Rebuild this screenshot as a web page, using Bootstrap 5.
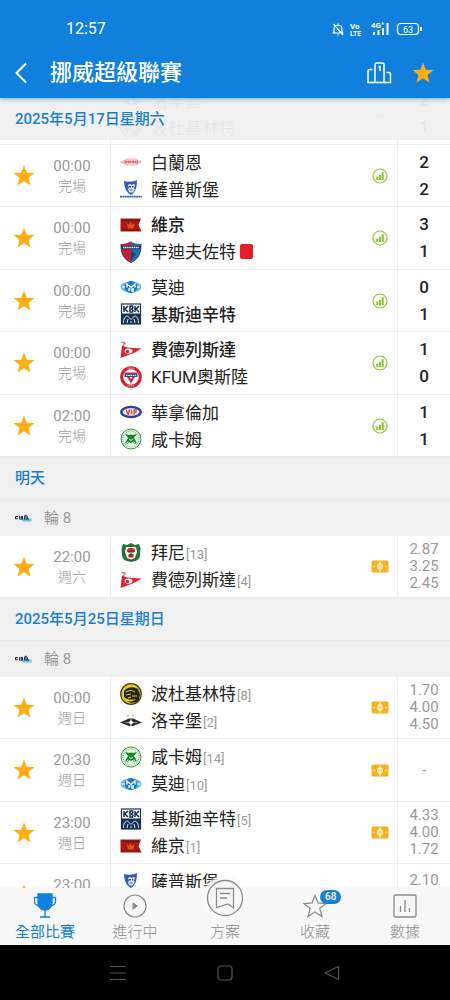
<!DOCTYPE html>
<html lang="zh-Hant">
<head>
<meta charset="utf-8">
<meta name="viewport" content="width=device-width, initial-scale=1">
<title>挪威超級聯賽</title>
<link href="https://cdn.jsdelivr.net/npm/bootstrap@5.3.0/dist/css/bootstrap.min.css" rel="stylesheet">
<style>
:root{--brand:#1080dc;--muted:#999;--line:#ececec;--band:#f0f0f0}
body{font-family:Roboto,"Noto Sans CJK TC",sans-serif;font-size:15px;color:#222;background:#fff}
.screen{height:100vh}
.top-bar{background:var(--brand);box-shadow:0 1px 5px rgba(16,128,220,.6);z-index:5}
.status{height:48px;padding:10px 28px 0 66px;font-size:16px}
.toolbar{height:50px;padding:0 16px 0 14px}
.toolbar h1{font-size:22px;font-weight:500;margin-left:22px}
.icon-btn{background:none;border:0;padding:0;display:flex;color:inherit}
svg{display:block;flex:none}
.scroll-area{min-height:0}
.date-head{height:42px;padding:0 15px;background:var(--band);color:#1b7fcf;font-size:15px;font-weight:500}
.date-head.pinned{top:0;z-index:2;height:42px;background:rgba(240,240,240,.96)}
.round-head{height:37px;padding:0 15px;gap:12px;background:var(--band);border-top:1px solid #eaeaea;color:var(--muted)}
.under-head{margin-top:-15px}
.match{display:grid;grid-template-columns:48px 62px minmax(0,1fr) 35px 53px;height:62px;border-bottom:1px solid var(--line)}
.match:nth-child(even){height:63px}
.when{padding-right:14px;line-height:20px;color:var(--muted)}
.when span:last-child{font-size:14px;font-weight:300}
.teams{border-left:1px solid var(--line);padding-left:9px}
.team{height:27px;gap:9px;font-size:17px;line-height:25px;white-space:nowrap}
.team span{padding-top:2px}
.team .won{font-weight:500}
.team small{font-size:13px;color:var(--muted);margin-left:1px}
.red-card{width:13px;height:15px;border-radius:2px;background:#e11e2b;margin-left:-5px}
.result{border-left:1px solid var(--line)}
.score{font-size:17px;font-weight:500;line-height:27px}
.odds{line-height:17px;color:var(--muted)}
.tabs{height:57px;background:#f7f7f7;box-shadow:0 0 3px rgba(0,0,0,.08);z-index:5}
.tabs a{color:#8b8b8b;font-size:15px;line-height:20px;font-weight:300;padding-top:4px;gap:3px;text-decoration:none}
.tabs a.active{color:var(--brand);font-weight:400}
.tab-icon{height:27px}
.plan-icon{width:38px;height:38px;margin-top:-13px;background:#f7f7f7;border-radius:50%;box-shadow:0 0 3px 3px #fafafa}
.fav-count{top:-2px;left:17px;font-size:10px;line-height:14px;font-weight:500;padding:0 5px;border-radius:7px;background:#1b7fcf;color:#fff}
.system-bar{height:55px;background:#000;color:#555;padding:0 64px}
</style>
</head>
<body>
<svg width="0" height="0" class="position-absolute" aria-hidden="true">
<symbol id="star" viewBox="0 0 22 22"><path fill="#fdae17" d="M11 .5l2.800 7.200 7.700.400-6 4.800 2 7.500-6.500-4.200-6.500 4.200 2-7.500-6-4.800 7.700-.400z"/></symbol>
<symbol id="stats" viewBox="0 0 16 16"><circle cx="8" cy="8" r="7" fill="#fbfff5" stroke="#8fc83e" stroke-width="1.200"/><path fill="#86c52c" d="M4.300 8.500h2v3.500h-2zM7 7h2v5H7zM9.700 4.200h2V12h-2z"/></symbol>
<symbol id="cash" viewBox="0 0 18 13"><rect x=".5" y=".5" width="17" height="12" rx="1.500" fill="#f6b024"/><g stroke="#fff3cf" stroke-width="1.300" fill="none"><ellipse cx="9" cy="6.500" rx="2.200" ry="2.600"/><path d="M9 1.500v10M2.500 6.500h1.300M14.200 6.500h1.300"/></g></symbol>
<symbol id="brann" viewBox="0 0 22 22"><path d="M1 11l6-3h8l6 3-6 3H7z" fill="#fff1f0" stroke="#ee8b86" stroke-width=".7"/><path d="M0 11h22" stroke="#f3b2ae" stroke-width=".7"/><path d="M5 10h2v2H5zM8.500 10h2v2h-2zM12 10h2v2h-2zM15.500 10h2v2h-2z" fill="none" stroke="#e0403c" stroke-width=".8"/></symbol>
<symbol id="sarps" viewBox="0 0 22 22"><path d="M4 3c4 1 9 1 13-1 0 6-1 12-6 15-4-2-7-7-7-14z" fill="#3b5bbb"/><path d="M8 7l2-1 2 1 2-1 1 1-1 3 .5 2-2 2.500h-3L8 12l1-2.500z" fill="#e3eafc"/><path d="M9 8h2v1.500H9zM12 8h1.500v1.500H12zM9.500 11.500h3v1h-3z" fill="#2a489f"/><path d="M0 18.700h22" stroke="#4361b5" stroke-width="1.800" stroke-dasharray="2 .3"/></symbol>
<symbol id="sarps-small" viewBox="0 0 22 22"><path d="M4 3c4 1 9 1 13-1 0 6-1 12-6 15-4-2-7-7-7-14z" fill="#3b5bbb"/><path d="M8 7l2-1 2 1 2-1 1 1-1 3 .5 2-2 2.500h-3L8 12l1-2.500z" fill="#e3eafc"/><path d="M9 8h2v1.500H9zM12 8h1.500v1.500H12zM9.500 11.500h3v1h-3z" fill="#2a489f"/></symbol>
<symbol id="viking" viewBox="0 0 22 22"><path d="M.5 4.500h20.500L18.500 11l3 6.500H.5z" fill="#a51b19"/><path d="M2 6.200h17" stroke="#6e1010" stroke-width="1.500" stroke-dasharray="2 .6"/><path d="M7 9l2 2.200L10.500 8l1.500 3 2.500-2-1 5.500H8z" fill="#e0551f"/><path d="M1 16h17" stroke="#7c1211"/></symbol>
<symbol id="sandefjord" viewBox="0 0 22 22"><path d="M11 .5c3 2 6.500 2.500 10 2.500.5 8-2 15-10 18.500C3 18 .5 11 1 3c3.500 0 7-.5 10-2.500z" fill="#246fa9"/><path d="M11 .5v21C3 18 .5 11 1 3c3.500 0 7-.5 10-2.500z" fill="#c81f35"/><path d="M1.500 6.500h19" stroke="#2a345a" stroke-width="3.500"/><path d="M3 6.500h16" stroke="#e6eef5" stroke-width="1.400" stroke-dasharray="1.300 .5"/><path d="M11 9l5 4-5 7z" fill="#174a7c"/><path d="M1 3c.0 8 1.500 15 10 18.500C19.500 18 21 11 21 3" fill="none" stroke="#34446f"/></symbol>
<symbol id="molde" viewBox="0 0 22 22"><ellipse cx="11" cy="11" rx="10.500" ry="5.500" fill="#65b8e7"/><ellipse cx="11" cy="11" rx="6.500" ry="6" fill="#187dc1"/><path d="M2 11h3M17 11h3" stroke="#dff3ff" stroke-width="1.500"/><path d="M7 11.500V8l4 3.500L15 8v3.500M9 15v-2h1.500M14 13h-2v2h2" fill="none" stroke="#fff" stroke-width="1.300"/></symbol>
<symbol id="kbk" viewBox="0 0 22 22"><rect x="1.500" y="1" width="19" height="20" fill="#fff" stroke="#193454" stroke-width="1.200"/><path d="M4 3v6M8 3L5 6l3 3M10 3v6h2.500L13 7.500 11.500 6 13 4.500 12.500 3zM15 3v6M19 3l-3 3 3 3" fill="none" stroke="#152f4e" stroke-width="1.500"/><path d="M2 10.500h18V21H2z" fill="#173150"/><path d="M3.500 20c0-4 1.500-7 4-7l3.500 3.500 3.500-3.500c2.500 0 4 3 4 7M7 20l1-4M11 20v-2M15 20l-1-4" fill="none" stroke="#dfe8f1"/></symbol>
<symbol id="fredrikstad" viewBox="0 0 22 22"><path d="M2 6.500l5 2L21.500 9.500 14 14 .5 19z" fill="#d92331"/><path d="M1 3l5 2M4.500 3l-1 4" stroke="#e36a6e" stroke-width="1.200"/><ellipse cx="8.500" cy="12" rx="4" ry="2.600" fill="#fff"/><circle cx="7.500" cy="12.500" r="1.700" fill="#d92331"/></symbol>
<symbol id="kfum" viewBox="0 0 22 22"><circle cx="11" cy="11" r="9.300" fill="#fff" stroke="#d02136" stroke-width="3"/><path d="M7.500 2.200h7M7.500 19.800h7" stroke="#fff" stroke-width=".8" stroke-dasharray="1 .7"/><path d="M4.500 6.500h13L11 17.500z" fill="#d02136"/><path d="M8.500 9h5L11 13.500z" fill="#fff"/><path d="M4.500 7.500h13v3.500h-13z" fill="#34498d"/><path d="M6 9.300h10" stroke="#fff" stroke-width="1.200" stroke-dasharray="1.500 .8"/></symbol>
<symbol id="vif" viewBox="0 0 22 22"><ellipse cx="11" cy="11" rx="9.700" ry="5" fill="#fff" stroke="#27419c" stroke-width="2.400"/><path d="M6 8.500l2 5 1.500-5M11.500 8.500v5M14 14V9h2v2.500h-2" fill="none" stroke="#e14b48" stroke-width="1.500"/></symbol>
<symbol id="hamkam" viewBox="0 0 22 22"><circle cx="11" cy="11" r="10" fill="#f3fff2" stroke="#329d3a"/><circle cx="11" cy="11" r="8" fill="none" stroke="#74bd74" stroke-width="1.500" stroke-dasharray="1 1"/><path d="M5 6l5 1 1-1 1 1 5-1-3 4 3 5-3 1-1-2-2 1-2-1-1 2-3-1 3-5z" fill="#18872b"/><path d="M9 11l2 1.500 2-1.500M7 15.500l1-2M15 15.500l-1-2" fill="none" stroke="#dbf6db"/></symbol>
<symbol id="bryne" viewBox="0 0 22 22"><path d="M3 2l4 1 4-2 4 2 4-1 1.500 4L20 14c-1 4-4 5-9 6-5-1-8-2-9-6L1.500 6z" fill="#2a6f3a"/><path d="M6 5h10l1 5-2 6-4 1.500L7 16l-2-6z" fill="#fff3ef"/><path d="M7 8c1-3 7-3 8 0v2H7zM8.500 12h5v3.500h-5z" fill="#b63435"/><path d="M8 10h6M11 11v4" stroke="#2f2a26"/></symbol>
<symbol id="bodo" viewBox="0 0 22 22"><circle cx="11" cy="11" r="10.300" fill="#e2ce1e" stroke="#403b12" stroke-width="1.200"/><path d="M4 8c3-4 9-5 14-2l2 5-1 6c-3 3-8 4-12 1 4 1 7 0 9-2-4 1-9 1-12-2z" fill="#252416"/><path d="M6 9c3-2 6-2 9 0M6 12l5-1M12 13h5M8 15l3-1" fill="none" stroke="#dfcc22" stroke-width="1.200"/></symbol>
<symbol id="rosenborg" viewBox="0 0 22 22"><path d="M0 12.500l9-4h4l9 4-9 3.500H9z" fill="#2c2c2c"/><path d="M5 12.500h12" stroke="#aaa" stroke-width=".8"/><path d="M11 9v7M9 12.500l2-2 2 2-2 2z" stroke="#fff" fill="#fff" stroke-width=".7"/><path d="M7 5.500h2M12 5.500h2" stroke="#eebd90" stroke-width="1.800"/></symbol>
<symbol id="league" viewBox="0 0 17 10"><path d="M6 5.500h10.500v3H8z" fill="#57c8e8"/><path d="M0 3h3v1.200H1v1h2v1H0zM4 3h4v3.500H4zM9 3l2-1.500L12.500 3 14 6.500H9z" fill="#24384f"/><path d="M5.500 3v3M11 3v3" stroke="#dbe8ef" stroke-width=".7"/></symbol>
</svg>

<div class="screen d-flex flex-column overflow-hidden">
<header class="top-bar position-relative text-white flex-shrink-0">
  <div class="status d-flex align-items-center justify-content-between">
    <span>12:57</span>
    <svg width="92" height="18" viewBox="0 0 92 18" fill="none" stroke="#fff" font-family="Roboto" role="img" aria-label="63%">
      <path d="M4 13V9c0-5 8-5 8 0v4M2.500 13h11M8 14.500v1M8 3.500V5M3.500 4l9.500 11" stroke-width="1.200"/>
      <g fill="#fff" stroke="none" font-weight="700"><text x="20" y="8.500" font-size="8">Vo</text><text x="20" y="15.500" font-size="7">LTE</text><text x="41" y="8" font-size="8">4G⁺</text></g>
      <path d="M44 15v-3M48.500 15v-5M53 15V8M57.500 15V3" stroke-width="2"/>
      <rect x="67.500" y="3.500" width="21" height="11" rx="3.500" stroke-width="1.200"/><path d="M91 7v4" stroke-width="2"/>
      <text x="73" y="12.500" font-size="9" fill="#fff" stroke="none">63</text>
    </svg>
  </div>
  <div class="toolbar d-flex align-items-center">
    <button class="icon-btn" type="button" aria-label="返回"><svg width="14" height="22" viewBox="0 0 14 22" fill="none" stroke="currentColor" stroke-width="2"><path d="M12 1.500L2.500 11 12 20.500"/></svg></button>
    <h1 class="mb-0 flex-grow-1">挪威超級聯賽</h1>
    <button class="icon-btn me-3" type="button" aria-label="積分榜"><svg width="25" height="22" viewBox="0 0 25 22" fill="none" stroke="currentColor" stroke-width="1.500"><path d="M5.500 7.500h-3a1.500 1.500 0 0 0-1.500 1.500V20.500h22.500V12a1.500 1.500 0 0 0-1.500-1.500h-2.500M8 20.500V2.500A1.500 1.500 0 0 1 9.500 1h6A1.500 1.500 0 0 1 17 2.500v18M11.500 5l1.500-.5V9"/></svg></button>
    <button class="icon-btn ms-1" type="button" aria-label="收藏聯賽"><svg width="22" height="22"><use href="#star"/></svg></button>
  </div>
</header>

<main class="scroll-area position-relative flex-grow-1 overflow-hidden">
  <h2 class="date-head pinned position-absolute w-100 mb-0 d-flex align-items-center">2025年5月17日星期六</h2>
  <section class="under-head">
    <article class="match">
      <div></div><div></div>
      <div class="teams d-flex flex-column justify-content-center"><div class="team d-flex align-items-center"><svg width="22" height="22"><use href="#rosenborg"/></svg><span>洛辛堡</span></div><div class="team d-flex align-items-center"><svg width="22" height="22"><use href="#bodo"/></svg><span>波杜基林特</span></div></div>
      <div class="d-flex align-items-center justify-content-center"><svg width="16" height="16"><use href="#stats"/></svg></div>
      <div class="result score d-flex flex-column align-items-center justify-content-center"><span>2</span><span>1</span></div>
    </article>
  </section>
  <section>
    <article class="match">
      <button class="icon-btn align-items-center justify-content-center" type="button" aria-label="收藏"><svg width="22" height="22"><use href="#star"/></svg></button>
      <div class="when d-flex flex-column align-items-center justify-content-center"><span>00:00</span><span>完場</span></div>
      <div class="teams d-flex flex-column justify-content-center"><div class="team d-flex align-items-center"><svg width="22" height="22"><use href="#brann"/></svg><span>白蘭恩</span></div><div class="team d-flex align-items-center"><svg width="22" height="22"><use href="#sarps"/></svg><span>薩普斯堡</span></div></div>
      <div class="d-flex align-items-center justify-content-center"><svg width="16" height="16"><use href="#stats"/></svg></div>
      <div class="result score d-flex flex-column align-items-center justify-content-center"><span>2</span><span>2</span></div>
    </article>
    <article class="match">
      <button class="icon-btn align-items-center justify-content-center" type="button" aria-label="收藏"><svg width="22" height="22"><use href="#star"/></svg></button>
      <div class="when d-flex flex-column align-items-center justify-content-center"><span>00:00</span><span>完場</span></div>
      <div class="teams d-flex flex-column justify-content-center"><div class="team d-flex align-items-center"><svg width="22" height="22"><use href="#viking"/></svg><span class="won">維京</span></div><div class="team d-flex align-items-center"><svg width="22" height="22"><use href="#sandefjord"/></svg><span>辛迪夫佐特</span><i class="red-card"></i></div></div>
      <div class="d-flex align-items-center justify-content-center"><svg width="16" height="16"><use href="#stats"/></svg></div>
      <div class="result score d-flex flex-column align-items-center justify-content-center"><span>3</span><span>1</span></div>
    </article>
    <article class="match">
      <button class="icon-btn align-items-center justify-content-center" type="button" aria-label="收藏"><svg width="22" height="22"><use href="#star"/></svg></button>
      <div class="when d-flex flex-column align-items-center justify-content-center"><span>00:00</span><span>完場</span></div>
      <div class="teams d-flex flex-column justify-content-center"><div class="team d-flex align-items-center"><svg width="22" height="22"><use href="#molde"/></svg><span>莫迪</span></div><div class="team d-flex align-items-center"><svg width="22" height="22"><use href="#kbk"/></svg><span class="won">基斯迪辛特</span></div></div>
      <div class="d-flex align-items-center justify-content-center"><svg width="16" height="16"><use href="#stats"/></svg></div>
      <div class="result score d-flex flex-column align-items-center justify-content-center"><span>0</span><span>1</span></div>
    </article>
    <article class="match">
      <button class="icon-btn align-items-center justify-content-center" type="button" aria-label="收藏"><svg width="22" height="22"><use href="#star"/></svg></button>
      <div class="when d-flex flex-column align-items-center justify-content-center"><span>00:00</span><span>完場</span></div>
      <div class="teams d-flex flex-column justify-content-center"><div class="team d-flex align-items-center"><svg width="22" height="22"><use href="#fredrikstad"/></svg><span class="won">費德列斯達</span></div><div class="team d-flex align-items-center"><svg width="22" height="22"><use href="#kfum"/></svg><span>KFUM奧斯陸</span></div></div>
      <div class="d-flex align-items-center justify-content-center"><svg width="16" height="16"><use href="#stats"/></svg></div>
      <div class="result score d-flex flex-column align-items-center justify-content-center"><span>1</span><span>0</span></div>
    </article>
    <article class="match">
      <button class="icon-btn align-items-center justify-content-center" type="button" aria-label="收藏"><svg width="22" height="22"><use href="#star"/></svg></button>
      <div class="when d-flex flex-column align-items-center justify-content-center"><span>02:00</span><span>完場</span></div>
      <div class="teams d-flex flex-column justify-content-center"><div class="team d-flex align-items-center"><svg width="22" height="22"><use href="#vif"/></svg><span>華拿倫加</span></div><div class="team d-flex align-items-center"><svg width="22" height="22"><use href="#hamkam"/></svg><span>咸卡姆</span></div></div>
      <div class="d-flex align-items-center justify-content-center"><svg width="16" height="16"><use href="#stats"/></svg></div>
      <div class="result score d-flex flex-column align-items-center justify-content-center"><span>1</span><span>1</span></div>
    </article>
  </section>

  <h2 class="date-head mb-0 d-flex align-items-center">明天</h2>
  <div class="round-head d-flex align-items-center"><svg width="17" height="10"><use href="#league"/></svg><span>輪 8</span></div>
  <section>
    <article class="match">
      <button class="icon-btn align-items-center justify-content-center" type="button" aria-label="收藏"><svg width="22" height="22"><use href="#star"/></svg></button>
      <div class="when d-flex flex-column align-items-center justify-content-center"><span>22:00</span><span>週六</span></div>
      <div class="teams d-flex flex-column justify-content-center"><div class="team d-flex align-items-center"><svg width="22" height="22"><use href="#bryne"/></svg><span>拜尼<small>[13]</small></span></div><div class="team d-flex align-items-center"><svg width="22" height="22"><use href="#fredrikstad"/></svg><span>費德列斯達<small>[4]</small></span></div></div>
      <div class="d-flex align-items-center justify-content-center"><svg width="18" height="13"><use href="#cash"/></svg></div>
      <div class="result odds d-flex flex-column align-items-center justify-content-center"><span>2.87</span><span>3.25</span><span>2.45</span></div>
    </article>
  </section>

  <h2 class="date-head mb-0 d-flex align-items-center">2025年5月25日星期日</h2>
  <div class="round-head d-flex align-items-center"><svg width="17" height="10"><use href="#league"/></svg><span>輪 8</span></div>
  <section>
    <article class="match">
      <button class="icon-btn align-items-center justify-content-center" type="button" aria-label="收藏"><svg width="22" height="22"><use href="#star"/></svg></button>
      <div class="when d-flex flex-column align-items-center justify-content-center"><span>00:00</span><span>週日</span></div>
      <div class="teams d-flex flex-column justify-content-center"><div class="team d-flex align-items-center"><svg width="22" height="22"><use href="#bodo"/></svg><span>波杜基林特<small>[8]</small></span></div><div class="team d-flex align-items-center"><svg width="22" height="22"><use href="#rosenborg"/></svg><span>洛辛堡<small>[2]</small></span></div></div>
      <div class="d-flex align-items-center justify-content-center"><svg width="18" height="13"><use href="#cash"/></svg></div>
      <div class="result odds d-flex flex-column align-items-center justify-content-center"><span>1.70</span><span>4.00</span><span>4.50</span></div>
    </article>
    <article class="match">
      <button class="icon-btn align-items-center justify-content-center" type="button" aria-label="收藏"><svg width="22" height="22"><use href="#star"/></svg></button>
      <div class="when d-flex flex-column align-items-center justify-content-center"><span>20:30</span><span>週日</span></div>
      <div class="teams d-flex flex-column justify-content-center"><div class="team d-flex align-items-center"><svg width="22" height="22"><use href="#hamkam"/></svg><span>咸卡姆<small>[14]</small></span></div><div class="team d-flex align-items-center"><svg width="22" height="22"><use href="#molde"/></svg><span>莫迪<small>[10]</small></span></div></div>
      <div class="d-flex align-items-center justify-content-center"><svg width="18" height="13"><use href="#cash"/></svg></div>
      <div class="result odds d-flex flex-column align-items-center justify-content-center"><span>-</span></div>
    </article>
    <article class="match">
      <button class="icon-btn align-items-center justify-content-center" type="button" aria-label="收藏"><svg width="22" height="22"><use href="#star"/></svg></button>
      <div class="when d-flex flex-column align-items-center justify-content-center"><span>23:00</span><span>週日</span></div>
      <div class="teams d-flex flex-column justify-content-center"><div class="team d-flex align-items-center"><svg width="22" height="22"><use href="#kbk"/></svg><span>基斯迪辛特<small>[5]</small></span></div><div class="team d-flex align-items-center"><svg width="22" height="22"><use href="#viking"/></svg><span>維京<small>[1]</small></span></div></div>
      <div class="d-flex align-items-center justify-content-center"><svg width="18" height="13"><use href="#cash"/></svg></div>
      <div class="result odds d-flex flex-column align-items-center justify-content-center"><span>4.33</span><span>4.00</span><span>1.72</span></div>
    </article>
    <article class="match">
      <button class="icon-btn align-items-center justify-content-center" type="button" aria-label="收藏"><svg width="22" height="22"><use href="#star"/></svg></button>
      <div class="when d-flex flex-column align-items-center justify-content-center"><span>23:00</span><span>週日</span></div>
      <div class="teams d-flex flex-column justify-content-center"><div class="team d-flex align-items-center"><svg width="22" height="22"><use href="#sarps-small"/></svg><span>薩普斯堡</span></div><div class="team"></div></div>
      <div></div>
      <div class="result odds d-flex flex-column align-items-center pt-1"><span class="pt-1">2.10</span></div>
    </article>
  </section>
</main>

<nav class="tabs row row-cols-5 g-0 flex-shrink-0 position-relative">
  <a href="#all" class="col active d-flex flex-column align-items-center"><span class="tab-icon d-flex align-items-center"><svg width="24" height="25" viewBox="0 0 24 25" fill="none" stroke="currentColor" stroke-width="1.300"><path d="M5 1h14v9c0 4-3 7-7 7s-7-3-7-7z" fill="currentColor"/><path d="M5 4.500H1.500V8c0 3 1.500 4.500 4 4.500M19 4.500h3.500V8c0 3-1.500 4.500-4 4.500M12 17v6.500M7 24h10"/></svg></span>全部比賽</a>
  <a href="#live" class="col d-flex flex-column align-items-center"><span class="tab-icon d-flex align-items-center"><svg width="24" height="24" viewBox="0 0 24 24" fill="none" stroke="currentColor" stroke-width="1.200"><circle cx="12" cy="12" r="11"/><path d="M9.500 8l5.500 4-5.500 4z" fill="currentColor" stroke="none"/></svg></span>進行中</a>
  <a href="#plans" class="col d-flex flex-column align-items-center"><span class="tab-icon"><svg class="plan-icon" viewBox="0 0 38 38" fill="none" stroke="currentColor" stroke-width="1.300"><circle cx="19" cy="19" r="17.500"/><path d="M10.500 9.500h17v19.500l-5.500-4-11.500 3.500zM14 14.500h10M14 19h7"/></svg></span>方案</a>
  <a href="#fav" class="col d-flex flex-column align-items-center"><span class="tab-icon position-relative d-flex align-items-center"><svg width="24" height="24" viewBox="0 0 24 24" fill="none" stroke="currentColor" stroke-width="1.300"><path d="M12 1.500l3 7.500 8 .5-6.200 5 2.200 8-7-4.500-7 4.500 2.200-8L1 9.500 9 9z"/></svg><span class="fav-count position-absolute">68</span></span>收藏</a>
  <a href="#data" class="col d-flex flex-column align-items-center"><span class="tab-icon d-flex align-items-center"><svg width="24" height="24" viewBox="0 0 24 24" fill="none" stroke="currentColor" stroke-width="1.300"><rect x="1" y="1" width="22" height="22" rx="1.500"/><path d="M7.500 12v6M12 6v12M16.500 14v4"/></svg></span>數據</a>
</nav>

<footer class="system-bar d-flex align-items-center justify-content-around flex-shrink-0">
  <button class="icon-btn" type="button" aria-label="選單"><svg width="16" height="16" viewBox="0 0 16 16" stroke="currentColor" stroke-width="1.200"><path d="M0 1.500h16M0 8h16M0 14.500h16"/></svg></button>
  <button class="icon-btn" type="button" aria-label="主畫面"><svg width="16" height="16" viewBox="0 0 16 16" fill="none" stroke="currentColor" stroke-width="1.200"><rect x="1" y="1" width="14" height="14" rx="3"/></svg></button>
  <button class="icon-btn" type="button" aria-label="返回上一頁"><svg width="16" height="16" viewBox="0 0 16 16" fill="none" stroke="currentColor" stroke-width="1.200" stroke-linejoin="round"><path d="M14.500 1.500v13L1 8z"/></svg></button>
</footer>
</div>
<script src="https://cdn.jsdelivr.net/npm/bootstrap@5.3.0/dist/js/bootstrap.bundle.min.js"></script>
</body>
</html>
